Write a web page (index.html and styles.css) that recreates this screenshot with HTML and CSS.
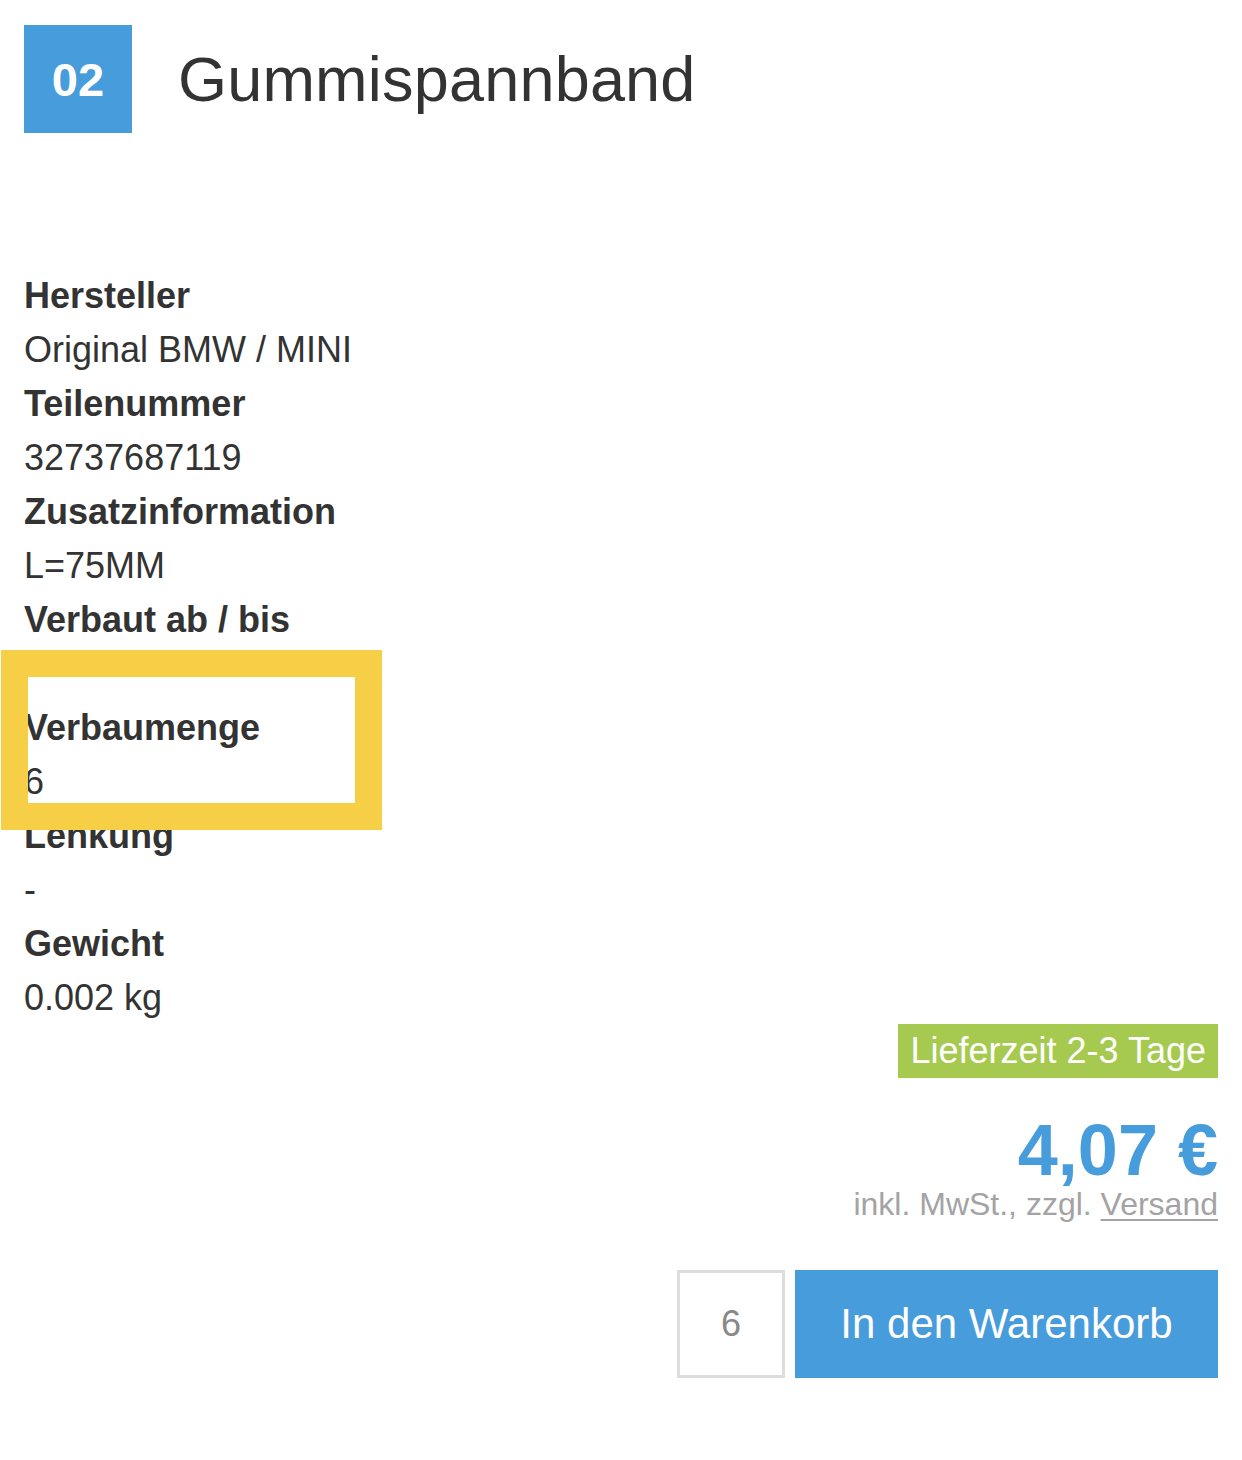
FILE: index.html
```html
<!DOCTYPE html>
<html lang="de">
<head>
<meta charset="utf-8">
<title>Gummispannband</title>
<link rel="stylesheet" href="styles.css">
</head>
<body>
<div class="page">
  <header class="head">
    <div class="num"><span>02</span></div>
    <h1 class="title">Gummispannband</h1>
  </header>

  <dl class="specs">
    <dt>Hersteller</dt>
    <dd>Original BMW / MINI</dd>
    <dt>Teilenummer</dt>
    <dd>32737687119</dd>
    <dt>Zusatzinformation</dt>
    <dd>L=75MM</dd>
    <dt>Verbaut ab / bis</dt>
    <dd>&nbsp;</dd>
    <dt>Verbaumenge</dt>
    <dd>6</dd>
    <dt>Lenkung</dt>
    <dd>-</dd>
    <dt>Gewicht</dt>
    <dd>0.002 kg</dd>
  </dl>

  <section class="buy">
    <div class="delivery">Lieferzeit 2-3 Tage</div>
    <div class="price">4,07 €</div>
    <div class="tax">inkl. MwSt., zzgl. <a href="#" class="ship">Versand</a></div>
    <div class="cart">
      <div class="qty">6</div>
      <button class="add" type="button">In den Warenkorb</button>
    </div>
  </section>

  <div class="highlight"></div>
</div>
</body>
</html>
```

FILE: styles.css
```css
html, body {
  margin: 0;
  padding: 0;
  background: #fff;
}

body {
  font-family: "Liberation Sans", Arial, Helvetica, sans-serif;
  color: #333;
}

.page {
  position: relative;
  padding: 25px 24px 0 24px;
  min-height: 1435px;
}

.head {
  display: flex;
  align-items: center;
  gap: 46px;
}

.num {
  width: 108px;
  height: 108px;
  background: #479cdb;
  color: #fff;
  display: flex;
  align-items: center;
  justify-content: center;
  font-weight: bold;
  font-size: 47px;
  line-height: 1;
}

.title {
  margin: 0;
  font-weight: normal;
  font-size: 63px;
  letter-spacing: 0.2px;
  line-height: 1;
  color: #333;
}

.specs {
  margin: 136px 0 0 0;
  font-size: 36px;
  line-height: 54px;
}

.specs dt {
  font-weight: bold;
}

.specs dd {
  margin: 0;
}

.buy {
  display: flex;
  flex-direction: column;
  align-items: flex-end;
  margin-top: -1px;
}

.delivery {
  background: #a6ca50;
  color: #fff;
  font-size: 36px;
  line-height: 54px;
  padding: 0 12px;
}

.price {
  margin-top: 36px;
  font-size: 72px;
  line-height: 72px;
  font-weight: bold;
  color: #479cdb;
}

.tax {
  font-size: 32px;
  line-height: 36px;
  color: #a3a3a3;
}

.ship {
  color: #a3a3a3;
  text-decoration: underline;
  text-underline-offset: 4px;
  text-decoration-thickness: 2px;
}

.cart {
  margin-top: 48px;
  display: flex;
  gap: 10px;
}

.qty {
  box-sizing: border-box;
  width: 108px;
  height: 108px;
  border: 3px solid #dddddd;
  display: flex;
  align-items: center;
  justify-content: center;
  font-size: 36px;
  color: #888;
}

.add {
  box-sizing: border-box;
  width: 423px;
  height: 108px;
  border: 0;
  background: #479cdb;
  color: #fff;
  font-family: "Liberation Sans", Arial, Helvetica, sans-serif;
  font-size: 42px;
  padding: 0;
  cursor: pointer;
}

.highlight {
  position: absolute;
  left: 1px;
  top: 650px;
  width: 381px;
  height: 180px;
  box-sizing: border-box;
  border: 27px solid #f7cf46;
  pointer-events: none;
}
```
